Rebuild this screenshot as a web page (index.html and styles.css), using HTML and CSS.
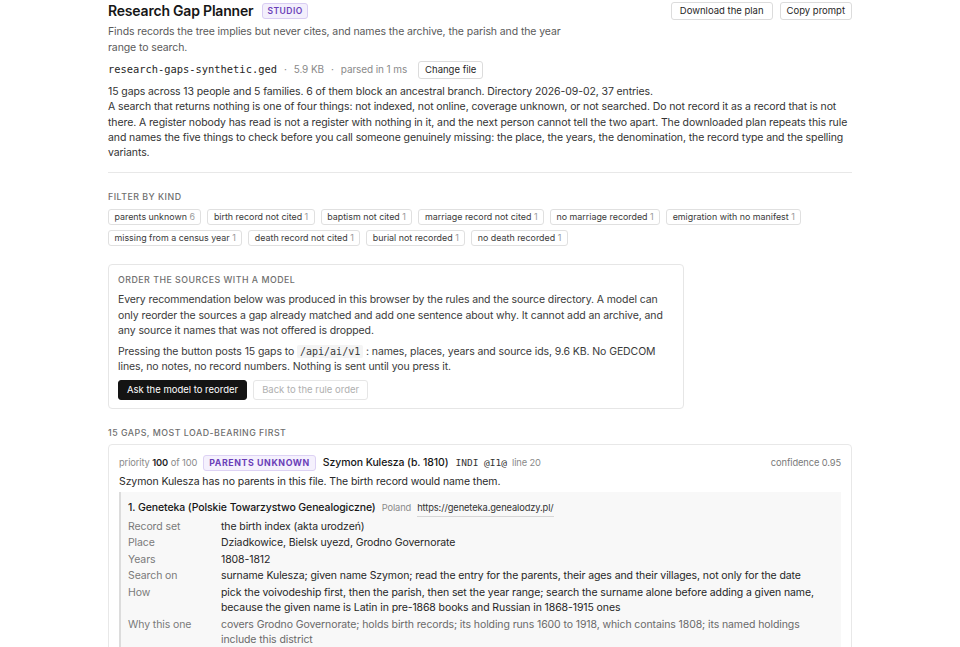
FILE: index.html
```html
<!DOCTYPE html>
<html lang="en">
<head>
<meta charset="utf-8">
<title>Research Gap Planner</title>
<link rel="stylesheet" href="styles.css">
</head>
<body>
<main class="page">
  <header class="head">
    <div class="head-main">
      <h1 class="title">Research Gap Planner <span class="tag">Studio</span></h1>
      <p class="lede">Finds records the tree implies but never cites, and names the archive, the parish and the year range to search.</p>
      <div class="file">
        <span class="file-name">research-gaps-synthetic.ged</span>
        <span class="file-meta">·</span>
        <span class="file-meta">5.9 KB</span>
        <span class="file-meta">·</span>
        <span class="file-meta">parsed in 1 ms</span>
        <button class="btn btn-sm">Change file</button>
      </div>
    </div>
    <div class="actions">
      <button class="btn">Download the plan</button>
      <button class="btn">Copy prompt</button>
    </div>
  </header>

  <section class="summary">
    <p>15 gaps across 13 people and 5 families. 6 of them block an ancestral branch. Directory 2026-09-02, 37 entries.</p>
    <p>A search that returns nothing is one of four things: not indexed, not online, coverage unknown, or not searched. Do not record it as a record that is not there. A register nobody has read is not a register with nothing in it, and the next person cannot tell the two apart. The downloaded plan repeats this rule and names the five things to check before you call someone genuinely missing: the place, the years, the denomination, the record type and the spelling variants.</p>
  </section>

  <section class="filters">
    <h2 class="label">Filter by kind</h2>
    <div class="chips">
      <button class="chip">parents unknown <span class="n">6</span></button>
      <button class="chip">birth record not cited <span class="n">1</span></button>
      <button class="chip">baptism not cited <span class="n">1</span></button>
      <button class="chip">marriage record not cited <span class="n">1</span></button>
      <button class="chip">no marriage recorded <span class="n">1</span></button>
      <button class="chip">emigration with no manifest <span class="n">1</span></button>
      <button class="chip">missing from a census year <span class="n">1</span></button>
      <button class="chip">death record not cited <span class="n">1</span></button>
      <button class="chip">burial not recorded <span class="n">1</span></button>
      <button class="chip">no death recorded <span class="n">1</span></button>
    </div>
  </section>

  <section class="model">
    <h2 class="label">Order the sources with a model</h2>
    <p>Every recommendation below was produced in this browser by the rules and the source directory. A model can only reorder the sources a gap already matched and add one sentence about why. It cannot add an archive, and any source it names that was not offered is dropped.</p>
    <p>Pressing the button posts 15 gaps to <code>/api/ai/v1</code> : names, places, years and source ids, 9.6 KB. No GEDCOM lines, no notes, no record numbers. Nothing is sent until you press it.</p>
    <div class="model-actions">
      <button class="btn btn-dark">Ask the model to reorder</button>
      <button class="btn btn-off" disabled>Back to the rule order</button>
    </div>
  </section>

  <section class="gaps">
    <h2 class="label">15 gaps, most load-bearing first</h2>
    <article class="gap">
      <div class="gap-top">
        <span class="prio">priority <b>100</b> of 100</span>
        <span class="kind">Parents unknown</span>
        <span class="who">Szymon Kulesza (b. 1810)</span>
        <code class="ref">INDI @I1@</code>
        <span class="line">line 20</span>
        <span class="conf">confidence 0.95</span>
      </div>
      <p class="gap-text">Szymon Kulesza has no parents in this file. The birth record would name them.</p>
      <div class="source">
        <div class="source-head">
          <span class="source-name">1. Geneteka (Polskie Towarzystwo Genealogiczne)</span>
          <span class="source-land">Poland</span>
          <a class="source-url" href="#">https://geneteka.genealodzy.pl/</a>
        </div>
        <dl class="facts">
          <dt>Record set</dt><dd>the birth index (akta urodzeń)</dd>
          <dt>Place</dt><dd>Dziadkowice, Bielsk uyezd, Grodno Governorate</dd>
          <dt>Years</dt><dd>1808-1812</dd>
          <dt>Search on</dt><dd>surname Kulesza; given name Szymon; read the entry for the parents, their ages and their villages, not only for the date</dd>
          <dt>How</dt><dd>pick the voivodeship first, then the parish, then set the year range; search the surname alone before adding a given name, because the given name is Latin in pre-1868 books and Russian in 1868-1915 ones</dd>
          <dt>Why this one</dt><dd class="muted">covers Grodno Governorate; holds birth records; its holding runs 1600 to 1918, which contains 1808; its named holdings include this district</dd>
        </dl>
      </div>
    </article>
  </section>
</main>
</body>
</html>
```

FILE: styles.css
```css
* { box-sizing: border-box; }

html, body { margin: 0; background: #fff; }

body {
  font-family: Inter, "Noto Sans", "Liberation Sans", sans-serif;
  color: #1f1f1f;
  font-size: 10.5px;
  letter-spacing: -0.1px;
  line-height: 15.4px;
}

p { margin: 0; }
h1, h2 { margin: 0; }

.page {
  width: 744px;
  margin: 0 auto;
  padding-top: 1px;
}

/* header */
.head {
  display: flex;
  justify-content: space-between;
  align-items: flex-start;
}

.title {
  display: flex;
  align-items: center;
  gap: 9px;
  font-size: 14px;
  line-height: 20px;
  font-weight: 600;
  letter-spacing: -0.2px;
  color: #161616;
}

.tag {
  font-size: 8.5px;
  line-height: 12px;
  font-weight: 600;
  letter-spacing: 0.5px;
  text-transform: uppercase;
  color: #6b3fb8;
  background: #f3effc;
  border: 1px solid #d9cdf3;
  border-radius: 3px;
  padding: 1px 4px;
}

.lede {
  margin-top: 3px;
  max-width: 460px;
  color: #5a5a5a;
  line-height: 16px;
}

.file {
  margin-top: 5px;
  display: flex;
  align-items: center;
  gap: 7px;
}

.file-name {
  font-family: "DejaVu Sans Mono", "Liberation Mono", monospace;
  font-size: 10.4px;
  letter-spacing: 0;
  color: #262626;
}

.file-meta {
  color: #8a8a8a;
  font-size: 10px;
}

.file .btn { margin-left: 4px; }

.actions {
  display: flex;
  gap: 7px;
  padding-top: 1px;
}

.btn {
  font-family: inherit;
  font-size: 9.5px;
  line-height: 12px;
  letter-spacing: 0;
  color: #1f1f1f;
  background: #fff;
  border: 1px solid #dcdcdc;
  border-radius: 3px;
  padding: 2px 8px;
  cursor: pointer;
}

.actions .btn + .btn { padding: 2px 6px; }

.btn-sm { padding: 2px 6px; }

.btn-dark {
  background: #141414;
  border-color: #141414;
  color: #fff;
  padding: 3px 8px;
}

.btn-off {
  color: #b0b0b0;
  border-color: #e6e6e6;
  padding: 3px 8px;
  cursor: default;
}

/* summary */
.summary {
  margin-top: 5px;
  padding-bottom: 12px;
  border-bottom: 1px solid #e8e8e8;
  color: #333;
}

.summary p { line-height: 15.3px; }

/* section labels */
.label {
  font-size: 8.8px;
  line-height: 12px;
  font-weight: 500;
  letter-spacing: 0.5px;
  text-transform: uppercase;
  color: #6f6f6f;
}

.filters { margin-top: 18px; }

.chips {
  margin-top: 6px;
  display: flex;
  flex-wrap: wrap;
  gap: 5px 6px;
}

.chip {
  font-family: inherit;
  font-size: 8.9px;
  line-height: 12px;
  letter-spacing: 0;
  color: #3a3a3a;
  background: #fff;
  border: 1px solid #e0e0e0;
  border-radius: 3px;
  padding: 1px 5.5px;
}

.chip .n { color: #9a9a9a; }

/* model panel */
.model {
  margin-top: 18px;
  width: 576px;
  border: 1px solid #e6e6e6;
  border-radius: 4px;
  padding: 9px 9px 8px;
}

.model .label { margin-bottom: 6px; }

.model p { color: #3a3a3a; line-height: 15.5px; }
.model p + p { margin-top: 5px; }

code {
  font-family: "DejaVu Sans Mono", "Liberation Mono", monospace;
  font-size: 10px;
  letter-spacing: 0;
  background: #f4f4f4;
  padding: 1px 3px;
  border-radius: 2px;
}

.model-actions {
  margin-top: 5px;
  display: flex;
  gap: 6px;
}

/* gap list */
.gaps { margin-top: 18px; }

.gap {
  margin-top: 5px;
  border: 1px solid #e8e8e8;
  border-radius: 4px;
  padding: 10px 10px 0;
}

.gap-top {
  display: flex;
  align-items: center;
  gap: 5px;
}

.prio { font-size: 9.3px; color: #8a8a8a; }
.prio b { color: #1f1f1f; font-weight: 600; }

.kind {
  font-size: 8.8px;
  line-height: 12px;
  font-weight: 700;
  letter-spacing: 0.6px;
  text-transform: uppercase;
  color: #6b3fb8;
  background: #f5f1fd;
  border: 1px solid #ddd2f4;
  border-radius: 3px;
  padding: 1px 5px;
  margin-left: 1px;
}

.who { font-weight: 500; color: #161616; margin-left: 2px; }

.ref {
  background: none;
  padding: 0;
  font-size: 9.5px;
  color: #333;
  margin-left: 2px;
}

.line { font-size: 9.3px; color: #8a8a8a; }

.conf {
  margin-left: auto;
  font-size: 9.3px;
  color: #7a7a7a;
}

.gap-text {
  margin-top: 3px;
  color: #2a2a2a;
}

.source {
  margin-top: 3px;
  background: #f8f8f8;
  border-left: 2px solid #dcdcdc;
  padding: 8px 10px 6px 7px;
}

.source-head {
  display: flex;
  align-items: baseline;
  gap: 6px;
}

.source-name { font-weight: 500; color: #161616; }
.source-land { font-size: 9.3px; color: #8a8a8a; }

.source-url {
  font-size: 9.3px;
  color: #333;
  text-decoration: none;
  border-bottom: 1px solid #d6d6d6;
}

.facts {
  margin: 2px 0 0;
  display: grid;
  grid-template-columns: 93px 1fr;
  row-gap: 1px;
  line-height: 15.5px;
}

.facts dt { color: #7a7a7a; }
.facts dd { margin: 0; color: #262626; }
.facts dd.muted { color: #6a6a6a; }
```
